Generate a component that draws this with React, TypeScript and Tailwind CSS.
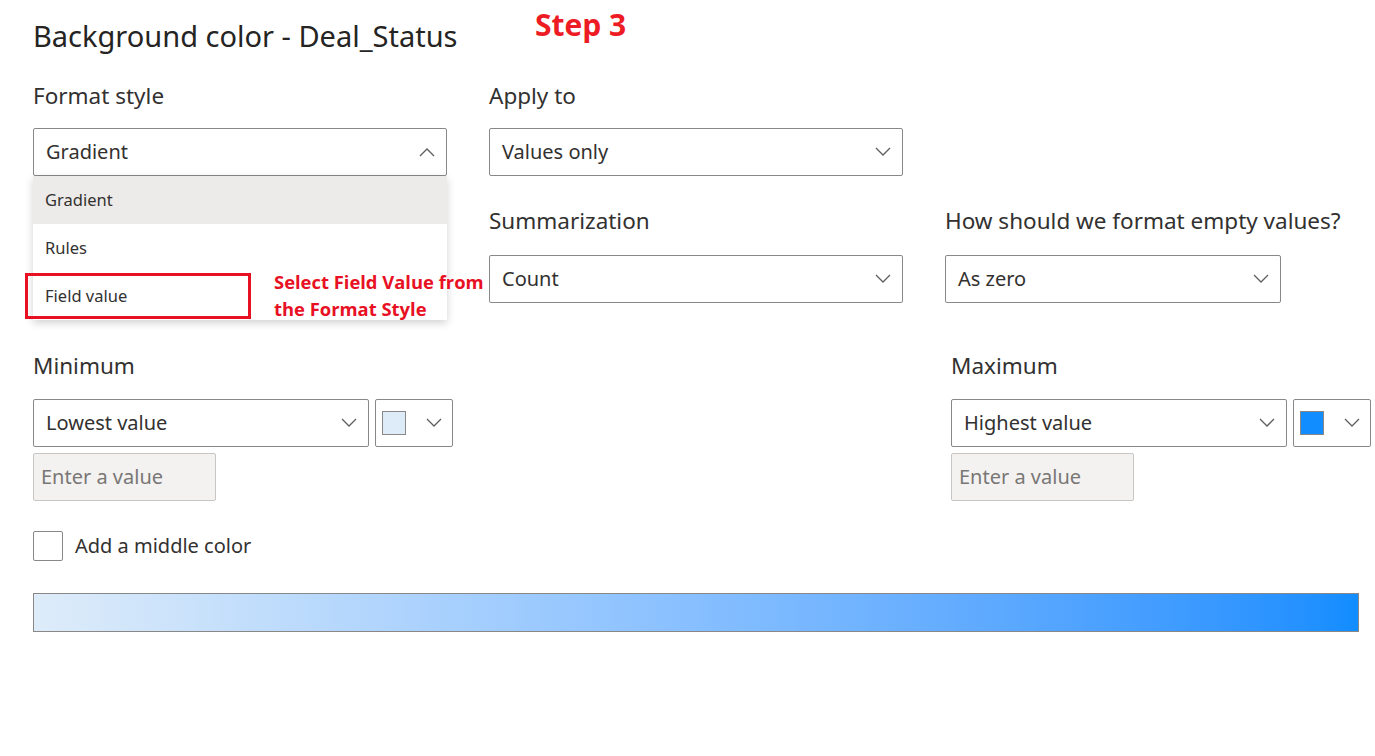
import React from "react";

const F = { fontFamily: '"Noto Sans", "Open Sans", sans-serif' };
const R = { fontFamily: '"Open Sans", "Noto Sans", sans-serif' };

function Chevron({ up = false }: { up?: boolean }) {
  return (
    <svg width="16" height="10" viewBox="0 0 16 10" className="shrink-0">
      <path
        d={up ? "M1 9 L8 2 L15 9" : "M1 1 L8 8 L15 1"}
        fill="none"
        stroke="#605e5c"
        strokeWidth="1.3"
      />
    </svg>
  );
}

function Select({ value, w, up = false }: { value: string; w: string; up?: boolean }) {
  return (
    <div
      className={`${w} h-[48px] flex items-center justify-between pl-[12px] pr-[11px] border border-[#8a8886] rounded-[2px] bg-white`}
    >
      <span className="text-[20px] text-[#323130] leading-none">{value}</span>
      <Chevron up={up} />
    </div>
  );
}

function ColorPick({ color }: { color: string }) {
  return (
    <div className="w-[78px] h-[48px] flex items-center justify-between pl-[6px] pr-[10px] border border-[#8a8886] rounded-[2px] bg-white">
      <div className="w-[24px] h-[24px] border border-[#8a8886]" style={{ background: color }} />
      <Chevron />
    </div>
  );
}

function Label({ children }: { children: React.ReactNode }) {
  return <div className="text-[22.5px] text-[#323130] leading-[28px] whitespace-nowrap">{children}</div>;
}

export default function App() {
  return (
    <div className="w-[1375px] h-[756px] bg-white overflow-hidden relative" style={F}>
      <div className="pl-[33px] pt-[13px]">
        {/* Title */}
        <div className="h-[44px] flex items-center">
          <div className="text-[29px] text-[#252423] leading-none whitespace-nowrap">Background color - Deal_Status</div>
        </div>
        <div
          className="absolute left-[535px] top-[2px] text-[30px] font-bold text-[#ed1c24]"
          style={R}
        >
          Step 3
        </div>

        {/* Row 1 */}
        <div className="flex mt-[25px]">
          <div className="w-[456px] relative">
            <Label>Format style</Label>
            <div className="mt-[18px]">
              <Select value="Gradient" w="w-[414px]" up />
            </div>
            {/* Dropdown menu */}
            <div className="absolute left-0 top-[94px] w-[414px] bg-white shadow-[0_3px_8px_rgba(0,0,0,0.18)] z-10">
              <div className="h-[48px] flex items-center pl-[12px] bg-[#edebe9] text-[16.5px] text-[#323130]">Gradient</div>
              <div className="h-[48px] flex items-center pl-[12px] text-[16.5px] text-[#323130]">Rules</div>
              <div className="h-[48px] flex items-center pl-[12px] text-[16.5px] text-[#323130]">Field value</div>
              <div className="absolute left-[-8px] top-[97px] w-[226px] h-[46px] border-[3px] border-[#e81123]" />
              <div
                className="absolute left-[241px] top-[92px] text-[18.4px] font-bold text-[#e81123] leading-[27px] whitespace-nowrap"
                style={R}
              >
                Select Field Value from
                <br />
                the Format Style
              </div>
            </div>
          </div>
          <div className="w-[456px]">
            <Label>Apply to</Label>
            <div className="mt-[18px]">
              <Select value="Values only" w="w-[414px]" />
            </div>
          </div>
        </div>

        {/* Row 2 */}
        <div className="flex mt-[31px]">
          <div className="w-[456px]" />
          <div className="w-[456px]">
            <Label>Summarization</Label>
            <div className="mt-[20px]">
              <Select value="Count" w="w-[414px]" />
            </div>
          </div>
          <div>
            <Label>How should we format empty values?</Label>
            <div className="mt-[20px]">
              <Select value="As zero" w="w-[336px]" />
            </div>
          </div>
        </div>

        {/* Row 3 */}
        <div className="flex mt-[49px]">
          <div className="w-[918px]">
            <Label>Minimum</Label>
            <div className="mt-[19px] flex gap-[6px]">
              <Select value="Lowest value" w="w-[336px]" />
              <ColorPick color="#deecf9" />
            </div>
            <div className="mt-[6px] w-[183px] h-[48px] flex items-center pl-[7px] bg-[#f3f2f1] border border-[#c8c6c4] rounded-[2px] text-[20px] text-[#797775]">
              Enter a value
            </div>
          </div>
          <div>
            <Label>Maximum</Label>
            <div className="mt-[19px] flex gap-[6px]">
              <Select value="Highest value" w="w-[336px]" />
              <ColorPick color="#118dff" />
            </div>
            <div className="mt-[6px] w-[183px] h-[48px] flex items-center pl-[7px] bg-[#f3f2f1] border border-[#c8c6c4] rounded-[2px] text-[20px] text-[#797775]">
              Enter a value
            </div>
          </div>
        </div>

        {/* Checkbox */}
        <div className="mt-[30px] flex items-center gap-[12px]">
          <div className="w-[30px] h-[30px] border border-[#8a8886] rounded-[2px]" />
          <span className="text-[20px] text-[#323130]">Add a middle color</span>
        </div>

        {/* Gradient bar */}
        <div className="mt-[32px] w-[1326px] h-[39px] border border-[#8a8886] bg-gradient-to-r from-[#deecf9] to-[#118dff]" />
      </div>
    </div>
  );
}
